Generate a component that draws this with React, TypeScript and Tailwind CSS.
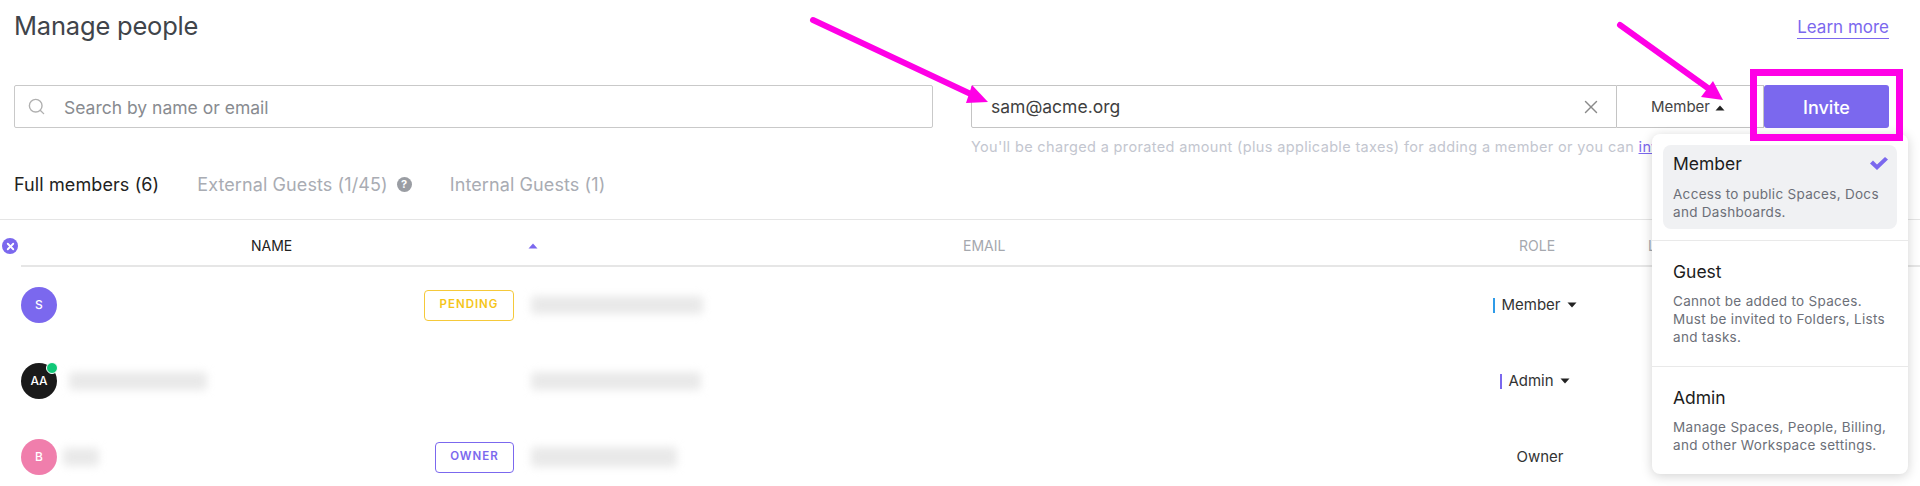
import React from "react";
import { Search, X } from "lucide-react";

function Caret({ up, color = "#222" }: { up?: boolean; color?: string }) {
  return (
    <svg width="10" height="6" viewBox="0 0 10 6" className="shrink-0">
      <path d={up ? "M5 0.5 L9.5 5.5 H0.5 Z" : "M5 5.5 L9.5 0.5 H0.5 Z"} fill={color} />
    </svg>
  );
}

function Blur({ w, h, className = "" }: { w: string; h: string; className?: string }) {
  return <div className={`${w} ${h} bg-[#e9e9e9] blur-[4px] rounded-sm ${className}`} />;
}

function Avatar({ bg, label, online }: { bg: string; label: string; online?: boolean }) {
  return (
    <div className={`relative w-[36px] h-[36px] rounded-full ${bg} flex items-center justify-center text-white text-[12px] font-medium shrink-0`}>
      {label}
      {online && <span className="absolute -top-[1px] -right-[1px] w-[12px] h-[12px] rounded-full bg-[#10c878] border border-white" />}
    </div>
  );
}

function MenuItem({ title, lines, selected }: { title: string; lines: string[]; selected?: boolean }) {
  return (
    <div className={`relative rounded-lg px-[10px] ${selected ? "bg-[#f0f1f3] pt-[8px] pb-[8px]" : "pt-[20px] pb-[11px]"}`}>
      <div className="text-[17.5px] leading-[22px] text-[#1c1c1c]">{title}</div>
      <div className={`${selected ? "mt-[10px]" : "mt-[9px]"} text-[13.5px] leading-[18px] tracking-[0.3px] text-[#6c6f78]`}>
        {lines.map((l) => (
          <div key={l} className="whitespace-nowrap">{l}</div>
        ))}
      </div>
      {selected && (
        <svg width="18" height="13" viewBox="0 0 18 13" className="absolute right-[9px] top-[12px]">
          <path d="M0 6.5 L3 3.5 L7 7.5 L15 0 L18 2.5 L7 13 Z" fill="#7b68ee" />
        </svg>
      )}
    </div>
  );
}

export default function App() {
  return (
    <div className="relative w-[1920px] h-[486px] overflow-hidden bg-white font-['Inter',sans-serif] text-[#3c3c3c]">
      {/* Header */}
      <div className="flex justify-between items-center pl-[14px] pr-[31px] pt-[9px] h-[43px]">
        <h1 className="text-[25.5px] leading-[34px] tracking-[-0.2px] text-[#40444a]">Manage people</h1>
        <a className="mt-[2px] text-[17px] leading-[22px] text-[#7b68ee] border-b border-[#7b68ee]">Learn more</a>
      </div>

      {/* Search + invite */}
      <div className="flex pl-[14px] pr-[31px] mt-[42px]">
        <div className="w-[919px] h-[43px] border border-[#c9c9c9] rounded-[2px] flex items-center pl-[12px]">
          <Search size={19} strokeWidth={1.75} color="#b0b0b0" />
          <span className="ml-[18px] pt-[3px] text-[17.5px] text-[#888b90]">Search by name or email</span>
        </div>
        <div className="ml-[38px] flex-1 flex flex-col min-w-0">
          <div className="flex h-[43px]">
            <div className="w-[646px] border border-[#c4c4c4] rounded-l-[2px] flex items-center justify-between pl-[19px] pr-[14px]">
              <span className="pt-[2px] text-[17.5px] text-[#3f3f3f]">sam@acme.org</span>
              <X size={22} strokeWidth={1.5} color="#8a8a8a" />
            </div>
            <div className="flex-1 border-y border-r border-[#c4c4c4] flex items-center pl-[34px] pt-[2px] gap-[5px]">
              <span className="text-[15px] text-[#444]">Member</span>
              <Caret up />
            </div>
            <div className="w-[125px] bg-[#7b68ee] rounded-[3px] flex items-center justify-center pt-[1px] text-white text-[18px] font-medium">
              Invite
            </div>
          </div>
          <p className="mt-[9px] text-[14.5px] leading-[20px] tracking-[0.35px] text-[#c3c6cf] whitespace-nowrap">
            You'll be charged a prorated amount (plus applicable taxes) for adding a member or you can{" "}
            <span className="text-[#7b68ee] underline">invite them as a guest</span>
          </p>
        </div>
      </div>

      {/* Tabs */}
      <div className="flex items-center pl-[14px] mt-[15px] h-[24px] text-[18px] tracking-[0.1px] text-[#a9acb3]">
        <span className="text-[#222]">Full members (6)</span>
        <span className="ml-[38px]">External Guests (1/45)</span>
        <span className="ml-[9px] w-[15px] h-[15px] rounded-full bg-[#9a9da3] text-white text-[11px] font-bold flex items-center justify-center">?</span>
        <span className="ml-[38px]">Internal Guests (1)</span>
      </div>
      <div className="mt-[23px] h-px bg-[#e5e5e5]" />

      {/* Table head */}
      <div className="h-[47px] ml-[21px] pt-[6px] border-b-2 border-[#e6e6e6] text-[14px] grid grid-cols-[942px_556px_129px_1fr] items-center">
        <div className="flex items-center pl-[230px]">
          <span className="text-[#222]">NAME</span>
          <span className="ml-[236px]"><Caret up color="#7b68ee" /></span>
        </div>
        <div className="text-[#a5a8ae]">EMAIL</div>
        <div className="text-[#a5a8ae]">ROLE</div>
        <div className="text-[#a5a8ae]">LAST</div>
      </div>

      {/* Rows */}
      <div className="ml-[21px]">
        <div className="h-[76px] grid grid-cols-[510px_869px_270px_1fr] items-center">
          <div className="flex items-center justify-between pr-[17px]">
            <Avatar bg="bg-[#7b68ee]" label="S" />
            <span className="w-[90px] h-[31px] border border-[#f5c93a] rounded-[4px] text-[#f5c518] text-[11.5px] font-semibold tracking-[1px] flex items-center justify-center">PENDING</span>
          </div>
          <Blur w="w-[172px]" h="h-[18px]" />
          <div className="flex items-center gap-[6px] justify-center">
            <span className="w-[2px] h-[15px] bg-[#2f9be8]" />
            <span className="text-[15px] text-[#333]">Member</span>
            <Caret />
          </div>
          <div />
        </div>
        <div className="h-[76px] grid grid-cols-[510px_869px_270px_1fr] items-center">
          <div className="flex items-center gap-[12px]">
            <Avatar bg="bg-[#1a1a1a]" label="AA" online />
            <Blur w="w-[138px]" h="h-[18px]" />
          </div>
          <Blur w="w-[170px]" h="h-[18px]" />
          <div className="flex items-center gap-[6px] justify-center">
            <span className="w-[2px] h-[15px] bg-[#7b68ee]" />
            <span className="text-[15px] text-[#333]">Admin</span>
            <Caret />
          </div>
          <div />
        </div>
        <div className="h-[76px] grid grid-cols-[510px_869px_270px_1fr] items-center">
          <div className="flex items-center justify-between pr-[17px]">
            <div className="flex items-center gap-[6px]">
              <Avatar bg="bg-[#f07eac]" label="B" />
              <Blur w="w-[36px]" h="h-[18px]" />
            </div>
            <span className="w-[79px] h-[31px] border border-[#7b68ee] rounded-[4px] text-[#7b68ee] text-[11.5px] font-semibold tracking-[1px] flex items-center justify-center">OWNER</span>
          </div>
          <Blur w="w-[146px]" h="h-[20px]" />
          <div className="pl-[10px] text-center text-[15px] text-[#333]">Owner</div>
          <div />
        </div>
      </div>

      {/* Clear filter */}
      <div className="absolute left-[2px] top-[238px] w-[16px] h-[16px] rounded-full bg-[#7b68ee] flex items-center justify-center">
        <X size={11} strokeWidth={4} color="#fff" />
      </div>

      {/* Dropdown */}
      <div className="absolute left-[1652px] top-[134px] w-[256px] h-[340px] bg-white rounded-lg shadow-[0_2px_12px_rgba(0,0,0,0.18)] pt-[11px]">
        <div className="px-[11px] pb-[11px] border-b border-[#e9e9e9]">
          <MenuItem selected title="Member" lines={["Access to public Spaces, Docs", "and Dashboards."]} />
        </div>
        <div className="px-[11px] h-[126px] border-b border-[#e9e9e9]">
          <MenuItem title="Guest" lines={["Cannot be added to Spaces.", "Must be invited to Folders, Lists", "and tasks."]} />
        </div>
        <div className="px-[11px]">
          <MenuItem title="Admin" lines={["Manage Spaces, People, Billing,", "and other Workspace settings."]} />
        </div>
      </div>

      {/* Annotations */}
      <div className="absolute left-[1750px] top-[69px] w-[153px] h-[72px] border-[7px] border-[#ff00e6]" />
      <svg className="absolute inset-0 pointer-events-none" width="1920" height="486" viewBox="0 0 1920 486">
        <g stroke="#ff00e6" strokeWidth="6" strokeLinecap="round" fill="none">
          <path d="M813 20 L975 96" />
          <path d="M1620 25 L1712 91" />
        </g>
        <path d="M988 102 L966 103 L972 85 Z" fill="#ff00e6" />
        <path d="M1723 100 L1701 97 L1713 81 Z" fill="#ff00e6" />
      </svg>
    </div>
  );
}
